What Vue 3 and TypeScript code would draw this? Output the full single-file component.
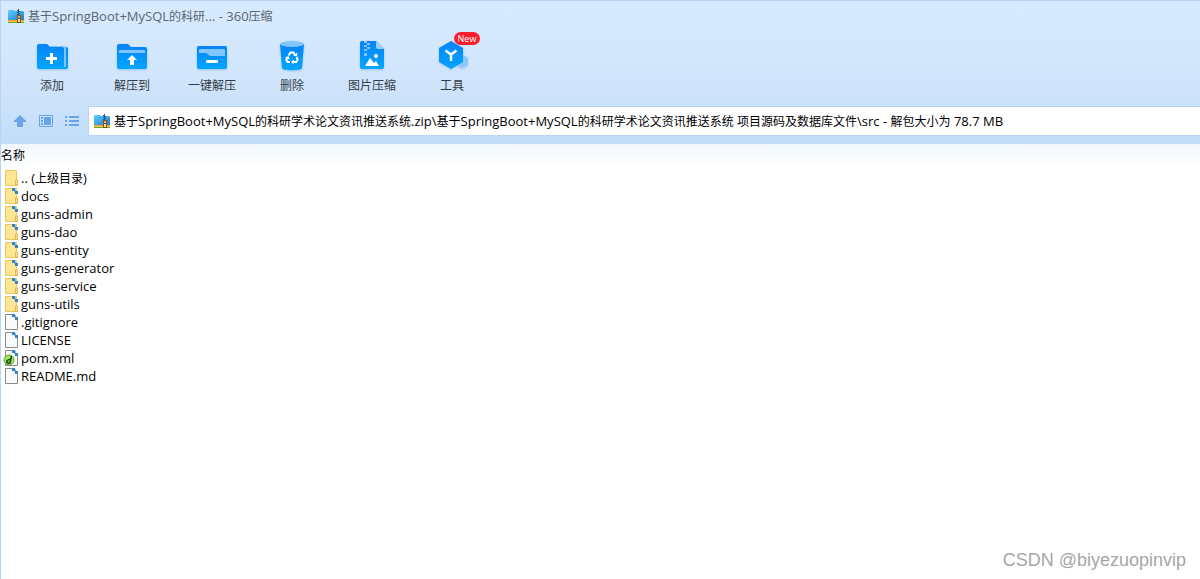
<script setup lang="ts">
interface Tool {
  id: string
  label: string
  badge?: string
}

interface Entry {
  name: string
  kind: 'parent' | 'folder' | 'file' | 'xml'
}

interface Run {
  text: string
  latin: boolean
}

const tools: Tool[] = [
  { id: 'add', label: '添加' },
  { id: 'extract', label: '解压到' },
  { id: 'quick', label: '一键解压' },
  { id: 'delete', label: '删除' },
  { id: 'image', label: '图片压缩' },
  { id: 'tools', label: '工具', badge: 'New' },
]

const entries: Entry[] = [
  { name: '.. (上级目录)', kind: 'parent' },
  { name: 'docs', kind: 'folder' },
  { name: 'guns-admin', kind: 'folder' },
  { name: 'guns-dao', kind: 'folder' },
  { name: 'guns-entity', kind: 'folder' },
  { name: 'guns-generator', kind: 'folder' },
  { name: 'guns-service', kind: 'folder' },
  { name: 'guns-utils', kind: 'folder' },
  { name: '.gitignore', kind: 'file' },
  { name: 'LICENSE', kind: 'file' },
  { name: 'pom.xml', kind: 'xml' },
  { name: 'README.md', kind: 'file' },
]

const title = '基于SpringBoot+MySQL的科研... - 360压缩'
const path =
  '基于SpringBoot+MySQL的科研学术论文资讯推送系统.zip\\基于SpringBoot+MySQL的科研学术论文资讯推送系统 项目源码及数据库文件\\src - 解包大小为 78.7 MB'

// Latin text is set one size larger than the Chinese text beside it.
function runs(text: string): Run[] {
  return (text.match(/[\x00-\x7f]+|[^\x00-\x7f]+/g) ?? []).map((part) => ({
    text: part,
    latin: part.charCodeAt(0) < 128,
  }))
}
</script>

<template>
  <main class="window">
    <svg class="defs" width="0" height="0" aria-hidden="true">
      <defs>
        <linearGradient id="blue" x1="0" y1="0" x2="0" y2="1">
          <stop offset="0" stop-color="#0583fb" />
          <stop offset="1" stop-color="#02a6fe" />
        </linearGradient>
        <linearGradient id="sky" x1="0" y1="0" x2="1" y2="1">
          <stop offset="0" stop-color="#5fd0fb" />
          <stop offset="1" stop-color="#1b7fd0" />
        </linearGradient>
        <symbol id="archive" viewBox="0 0 16 15">
          <path d="M0 2a1 1 0 0 1 1-1h5l1 1h8l1 1v8H0z" fill="url(#sky)" />
          <path d="M0 11h16v1H0z" fill="#f5a02c" />
          <path d="M0 12h16v1H0z" fill="#f3c83a" />
          <path d="M0 13h16v1H0z" fill="#5fae3a" />
          <path d="M10 0h1v7h-1z" fill="#2b5876" />
          <path d="M9 1h1v1H9zM11 2h1v1h-1zM9 3h1v1H9zM11 4h1v1h-1zM9 5h1v1H9z" fill="#2b5876" />
          <path d="M9 6h4v8H9z" fill="#8a4c1c" />
          <path d="M10 7h2v2h-2z" fill="#f4b154" />
          <path d="M10 10h2v3h-2z" fill="#ffe3a0" />
        </symbol>
      </defs>
    </svg>

    <header class="top">
      <div class="titlebar">
        <svg class="app-icon" viewBox="0 0 16 15" aria-hidden="true"><use href="#archive" /></svg>
        <h1 class="title">
          <span v-for="(run, i) in runs(title)" :key="i" :class="{ latin: run.latin }">{{ run.text }}</span>
        </h1>
      </div>

      <nav class="toolbar" aria-label="工具栏">
        <button v-for="tool in tools" :key="tool.id" type="button" class="tool">
          <span class="tool-picture">
            <svg class="tool-icon" viewBox="0 0 32 32" aria-hidden="true">
              <template v-if="tool.id === 'add'">
                <path d="M12 7h18a2 2 0 0 1 2 2v18a2 2 0 0 1-2 2H12z" fill="url(#blue)" />
                <path d="M14 6h14a2 2 0 0 1 2 2v19h-2V9H14z" fill="#83c5ff" />
                <path d="M1 6a2 2 0 0 1 2-2h8l3 3h12a2 2 0 0 1 2 2v20H3a2 2 0 0 1-2-2z" fill="url(#blue)" />
                <path d="M15.500 13v11M10 18.500h11" stroke="#fff" stroke-width="3" />
              </template>
              <template v-else-if="tool.id === 'extract'">
                <path d="M1 6a2 2 0 0 1 2-2h9l3 3h14a2 2 0 0 1 2 2v18a2 2 0 0 1-2 2H3a2 2 0 0 1-2-2z" fill="url(#blue)" />
                <path d="M3 11a1 1 0 0 1 1-1h24a1 1 0 0 1 1 1v2H3z" fill="#83c5ff" />
                <path d="M16 15l5 5h-3v5h-4v-5h-3z" fill="#fff" />
              </template>
              <template v-else-if="tool.id === 'quick'">
                <rect x="1" y="6" width="30" height="23" rx="2" fill="url(#blue)" />
                <path d="M3 10a1 1 0 0 1 1-1h24a1 1 0 0 1 1 1v6H15c-3 0-3-3-5-3H3z" fill="#83c5ff" />
                <rect x="10" y="20" width="12" height="3" rx="1" fill="#fff" />
              </template>
              <template v-else-if="tool.id === 'delete'">
                <path d="M4 4h24l-2 24c0 3-20 3-20 0z" fill="url(#blue)" />
                <ellipse cx="16" cy="4" rx="12" ry="3" fill="#83c5ff" />
                <g fill="none" stroke="#fff" stroke-width="2">
                  <path d="M12.500 15.500l2-3h3l1.500 2.500" />
                  <path d="M20.500 17l1.200 2.500-1.500 2.500h-3.700" />
                  <path d="M14 22h-2.500l-1.300-2.500 1.500-2.500" />
                </g>
                <path d="M17.300 15.700l3.700.5.300-3.600zM17.700 19.500v5L15 22zM9 17.300l3.800-1 .7 3.500z" fill="#fff" />
              </template>
              <template v-else-if="tool.id === 'image'">
                <path d="M4 3a2 2 0 0 1 2-2h14l8 8v18a2 2 0 0 1-2 2H6a2 2 0 0 1-2-2z" fill="url(#blue)" />
                <path d="M20 1l8 8h-6a2 2 0 0 1-2-2z" fill="#9bd0ff" />
                <path d="M8 1h3v2H8zM11 3h3v2h-3zM8 5h3v2H8zM11 7h3v2h-3zM8 9h3v2H8zM8 13h3v3H8z" fill="#83c5ff" />
                <circle cx="20" cy="16" r="2" fill="#fff" />
                <path d="M9 26l5-8 4 5 2-2 3 5z" fill="#fff" />
              </template>
              <template v-else>
                <path d="M27 15l5 3v7l-6 3-6-3v-7z" fill="#8cc8ff" />
                <path d="M15 1l12 7v14l-12 7-12-7V8z" fill="url(#blue)" />
                <path d="M9.500 10.500l5.500 4 5.500-4M15 14v7" fill="none" stroke="#fff" stroke-width="2.500" />
              </template>
            </svg>
            <span v-if="tool.badge" class="badge">{{ tool.badge }}</span>
          </span>
          <span class="tool-label">{{ tool.label }}</span>
        </button>
      </nav>

      <div class="location">
        <div class="views">
          <button type="button" class="view" aria-label="上级目录">
            <svg viewBox="0 0 14 14" aria-hidden="true"><path d="M7 1l7 7h-4v5H4V8H0z" fill="#69a3ec" /></svg>
          </button>
          <button type="button" class="view" aria-label="预览">
            <svg viewBox="0 0 14 14" aria-hidden="true">
              <path d="M.5 1.500h13v11H.5z" fill="none" stroke="#69a3ec" />
              <path d="M5 3h7v8H5zM2 3h2v2H2zM2 6h2v2H2zM2 9h2v2H2z" fill="#69a3ec" />
            </svg>
          </button>
          <button type="button" class="view" aria-label="列表">
            <svg viewBox="0 0 14 14" aria-hidden="true">
              <path d="M0 2h2v2H0zM4 2h10v2H4zM0 6h2v2H0zM4 6h10v2H4zM0 10h2v2H0zM4 10h10v2H4z" fill="#69a3ec" />
            </svg>
          </button>
        </div>
        <div class="address">
          <svg class="app-icon" viewBox="0 0 16 15" aria-hidden="true"><use href="#archive" /></svg>
          <span class="path">
            <span v-for="(run, i) in runs(path)" :key="i" :class="{ latin: run.latin }">{{ run.text }}</span>
          </span>
        </div>
      </div>
    </header>

    <table class="files">
      <thead>
        <tr><th scope="col">名称</th></tr>
      </thead>
      <tbody>
        <tr v-for="entry in entries" :key="entry.name">
          <td>
            <div class="entry">
              <svg class="entry-icon" viewBox="0 0 16 16" aria-hidden="true">
                <template v-if="entry.kind === 'parent' || entry.kind === 'folder'">
                  <path d="M2.500.5h11v9l1 1v5h-12z" fill="#ffe694" stroke="#e9c65c" />
                  <path d="M12.500 15v-5h2v5z" fill="#ffe08a" stroke="#e2b94a" />
                </template>
                <template v-else>
                  <path d="M2.500.5h8l4 4v11h-12z" fill="#fafafa" stroke="#8b8b8b" />
                </template>
                <g v-if="entry.kind !== 'parent'">
                  <path d="M9 0h3v3H9zM12 3h3v3h-3z" fill="#3984c9" />
                  <path d="M12 1h1v2h-1zM11 3h1v1h-1z" fill="#8dbbe3" />
                </g>
                <template v-if="entry.kind === 'xml'">
                  <circle cx="6" cy="10" r="5" fill="#a4e45a" stroke="#5cab35" />
                  <path d="M8.500 6L7 13H4.500c-2-1 0-4 3-3.500" fill="none" stroke="#17451c" stroke-width="1.500" />
                </template>
              </svg>
              <span>
                <span v-for="(run, i) in runs(entry.name)" :key="i" :class="{ latin: run.latin }">{{ run.text }}</span>
              </span>
            </div>
          </td>
        </tr>
      </tbody>
    </table>

    <footer class="watermark">CSDN @biyezuopinvip</footer>
  </main>
</template>

<style>
body {
  margin: 0;
}
</style>

<style scoped>
.window {
  box-sizing: border-box;
  display: flex;
  flex-direction: column;
  min-height: 100vh;
  border-left: 1px solid #b7d3f5;
  background: #fff;
  color: #000;
  font: 12px/18px "Open Sans", "Noto Sans CJK SC", sans-serif;
}

.defs {
  position: absolute;
}

.latin {
  font-size: 13px;
  white-space: pre-wrap;
}

.top {
  border-top: 1px solid #b7d3f5;
  background: linear-gradient(#d8eaff, #cfe4fb 60%, #c2ddf9);
}

.titlebar {
  display: flex;
  align-items: center;
  gap: 4px;
  height: 31px;
  padding-left: 7px;
}

.app-icon {
  flex: none;
  width: 16px;
  height: 15px;
}

.title {
  margin: 0;
  color: #5d6772;
  font-size: 12px;
  font-weight: 400;
}

.toolbar {
  display: flex;
  height: 74px;
  padding-left: 11px;
}

.tool {
  display: flex;
  flex-direction: column;
  align-items: center;
  gap: 5px;
  width: 80px;
  padding: 8px 0 0;
  border: 0;
  background: none;
  color: #333b44;
  font: inherit;
}

.tool-picture {
  position: relative;
  height: 32px;
}

.tool-icon {
  display: block;
  width: 32px;
  height: 32px;
  filter: drop-shadow(0 1px 1px #9fc8f0);
}

.badge {
  position: absolute;
  top: -8px;
  left: 18px;
  width: 26px;
  border-radius: 7px;
  background: #fa1e2d;
  color: #fff;
  font-size: 9px;
  line-height: 13px;
}

.location {
  display: flex;
  align-items: center;
  padding: 0 0 8px;
}

.views {
  display: flex;
  gap: 12px;
  padding: 0 9px 0 12px;
}

.view {
  width: 14px;
  height: 14px;
  padding: 0;
  border: 0;
  background: none;
}

.view svg {
  display: block;
}

.address {
  display: flex;
  flex: 1;
  align-items: center;
  gap: 4px;
  height: 28px;
  padding-left: 5px;
  border: 1px solid #b7d5f4;
  border-right: 0;
  background: #fff;
}

.files {
  width: 100%;
  border-collapse: collapse;
  background: linear-gradient(#f1f7fe, #fff 24px);
}

.files th {
  height: 25px;
  padding: 0 0 2px;
  box-sizing: border-box;
  font-weight: 400;
  text-align: left;
}

.files td {
  height: 18px;
  padding: 0 0 0 2px;
}

.entry {
  display: flex;
  align-items: center;
  gap: 2px;
  height: 18px;
}

.entry-icon {
  flex: none;
  width: 16px;
  height: 16px;
}

.watermark {
  margin-top: auto;
  padding: 0 14px 7px 0;
  color: #a6a6a6;
  font: 18px/24px "Liberation Sans", Arial, sans-serif;
  text-align: right;
}
</style>
